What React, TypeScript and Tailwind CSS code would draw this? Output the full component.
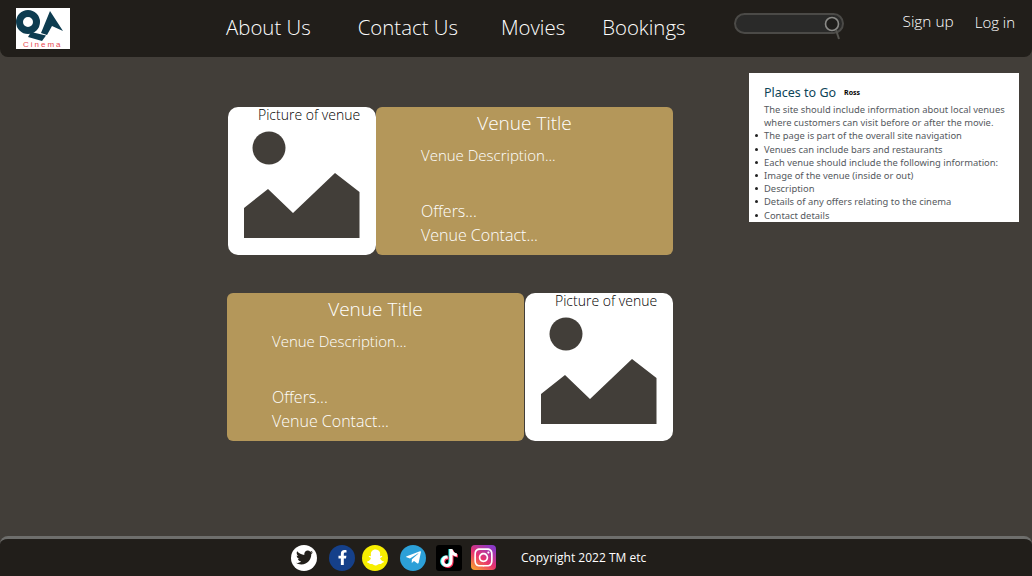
import { FaTwitter, FaFacebookF, FaSnapchatGhost, FaTelegramPlane, FaTiktok, FaInstagram } from 'react-icons/fa';

const font = "font-['Open_Sans',sans-serif]";

function VenuePicture() {
  return (
    <div className="h-[148px] w-[148px] shrink-0 rounded-[10px] bg-white">
      <p className="pl-[30px] text-[14px] leading-[15px] font-light text-black">Picture of venue</p>
      <svg width="148" height="133" viewBox="0 15 148 133">
        <circle cx="41" cy="41" r="16.5" fill="#423e39" />
        <polygon points="16,101 40,82 65,106 107,66 131.5,85 131.5,131 16,131" fill="#423e39" />
      </svg>
    </div>
  );
}

function VenueInfo() {
  return (
    <div className="h-[148px] w-[297px] shrink-0 rounded-[6px] bg-[#b4975a] text-white">
      <h2 className="pt-[3px] text-center text-[19px] leading-[27px] font-light">Venue Title</h2>
      <div className="pl-[45px] text-[16px] font-light">
        <p className="mt-[6px] text-[15px] leading-[24px]">Venue Description...</p>
        <p className="mt-[32px] leading-[24px]">Offers...</p>
        <p className="leading-[24px]">Venue Contact...</p>
      </div>
    </div>
  );
}

function Logo() {
  return (
    <div className="ml-4 h-[41px] w-[54px] shrink-0 overflow-hidden bg-white">
      <svg className="block" width="54" height="33" viewBox="0 0 54 33">
        <circle cx="12" cy="14" r="8.5" fill="none" stroke="#0d3c50" strokeWidth="7" />
        <polygon points="15,24 30,27.5 26,33 12,29" fill="#0d3c50" />
        <polygon points="34,3 47,23 36,18 31,27 25,25" fill="#0d3c50" />
      </svg>
      <p className="pl-[7px] font-['Liberation_Sans',sans-serif] text-[8px] leading-[8px] tracking-[2px] text-[#e8474f]">Cinema</p>
    </div>
  );
}

function Brief() {
  const items = [
    'The page is part of the overall site navigation',
    'Venues can include bars and restaurants',
    'Each venue should include the following information:',
    'Image of the venue (inside or out)',
    'Description',
    'Details of any offers relating to the cinema',
    'Contact details',
  ];
  return (
    <div className="ml-[76px] h-[149px] w-[270px] shrink-0 overflow-hidden bg-white pt-[12px] pl-[15px] font-['Noto_Sans',sans-serif] text-[9.4px] leading-[13.2px] text-[#55595e]">
      <div className="flex items-center">
        <h3 className="text-[12.5px] leading-[15px] text-[#0d4458]">Places to Go</h3>
        <span className="ml-[8px] text-[7px] font-bold text-black">Ross</span>
      </div>
      <p className="mt-[3px] whitespace-nowrap">The site should include information about local venues<br />where customers can visit before or after the movie.</p>
      <ul>
        {items.map((item) => (
          <li key={item} className="relative whitespace-nowrap">
            <span className="absolute top-[5px] -left-[9px] h-[3px] w-[3px] rounded-full bg-[#222]" />
            {item}
          </li>
        ))}
      </ul>
    </div>
  );
}

export default function App() {
  return (
    <div className={`flex h-[576px] w-[1032px] flex-col overflow-hidden bg-[#423e39] ${font}`}>
      {/* HEADER */}
      <header className="flex h-[57px] shrink-0 items-center rounded-b-[8px] bg-[#211e1a] text-white">
        <Logo />
        <nav className="ml-[156px] flex -translate-y-px text-[20.4px] leading-[27px] font-light">
          <a>About Us</a>
          <a className="ml-[47px]">Contact Us</a>
          <a className="ml-[43px]">Movies</a>
          <a className="ml-[37px]">Bookings</a>
        </nav>
        <div className="relative ml-[49px] h-[21px] w-[110px] -translate-y-[5px] rounded-full border-2 border-[#4b4a47] bg-[#2a2a29]">
          <svg className="absolute top-0 right-[-2px]" width="22" height="30" viewBox="0 0 22 30">
            <circle cx="10" cy="9" r="6.5" fill="#1f1e1c" stroke="#8b8b88" strokeWidth="1.6" />
            <line x1="14" y1="15" x2="17" y2="24" stroke="#55544f" strokeWidth="2" />
          </svg>
        </div>
        <a className="ml-[58px] -translate-y-[7px] text-[15.4px] leading-[22px] font-light">Sign up</a>
        <a className="ml-[21px] -translate-y-[7px] text-[15px] leading-[22px] font-light">Log in</a>
      </header>

      {/* CONTENT */}
      <main className="flex flex-1 items-start pt-4 pl-[227px]">
        <div className="w-[446px] pt-[34px]">
          <div className="flex pl-px">
            <VenuePicture />
            <VenueInfo />
          </div>
          <div className="mt-[37.5px] flex">
            <VenueInfo />
            <div className="ml-px">
              <VenuePicture />
            </div>
          </div>
        </div>
        <Brief />
      </main>

      {/* FOOTER */}
      <footer className="flex h-[40px] shrink-0 items-center rounded-t-[8px] border-t-[3px] border-[#6e6e6c] bg-[#211e1a] pl-[291px] text-white">
        <span className="flex h-[26px] w-[26px] items-center justify-center rounded-full bg-white text-[#211e1a]"><FaTwitter size={17} /></span>
        <span className="ml-3 flex h-[26px] w-[26px] items-center justify-center rounded-full bg-[#15408a] text-white"><FaFacebookF size={15} /></span>
        <span className="ml-[7px] flex h-[26px] w-[26px] items-center justify-center rounded-full bg-[#f7ee00] text-white"><FaSnapchatGhost size={17} /></span>
        <span className="ml-3 flex h-[26px] w-[26px] items-center justify-center rounded-full bg-[#2ca0d8] text-white"><FaTelegramPlane size={17} /></span>
        <span className="relative ml-[10px] flex h-[26px] w-[26px] items-center justify-center rounded-[3px] bg-black text-white">
          <FaTiktok size={18} className="absolute top-[4px] left-[3px] text-[#25f4ee]" />
          <FaTiktok size={18} className="absolute top-[5px] left-[5px] text-[#fe2c55]" />
          <FaTiktok size={18} className="absolute top-[4.5px] left-[4px] text-white" />
        </span>
        <span className="ml-[9px] flex h-[25px] w-[25px] items-center justify-center rounded-[4px] bg-[linear-gradient(35deg,#f9a030_5%,#e8336e_45%,#8a3ac8_90%)] text-white"><FaInstagram size={21} /></span>
        <p className="ml-[25px] text-[12px] leading-[17px] font-normal">Copyright 2022 TM etc</p>
      </footer>
    </div>
  );
}
